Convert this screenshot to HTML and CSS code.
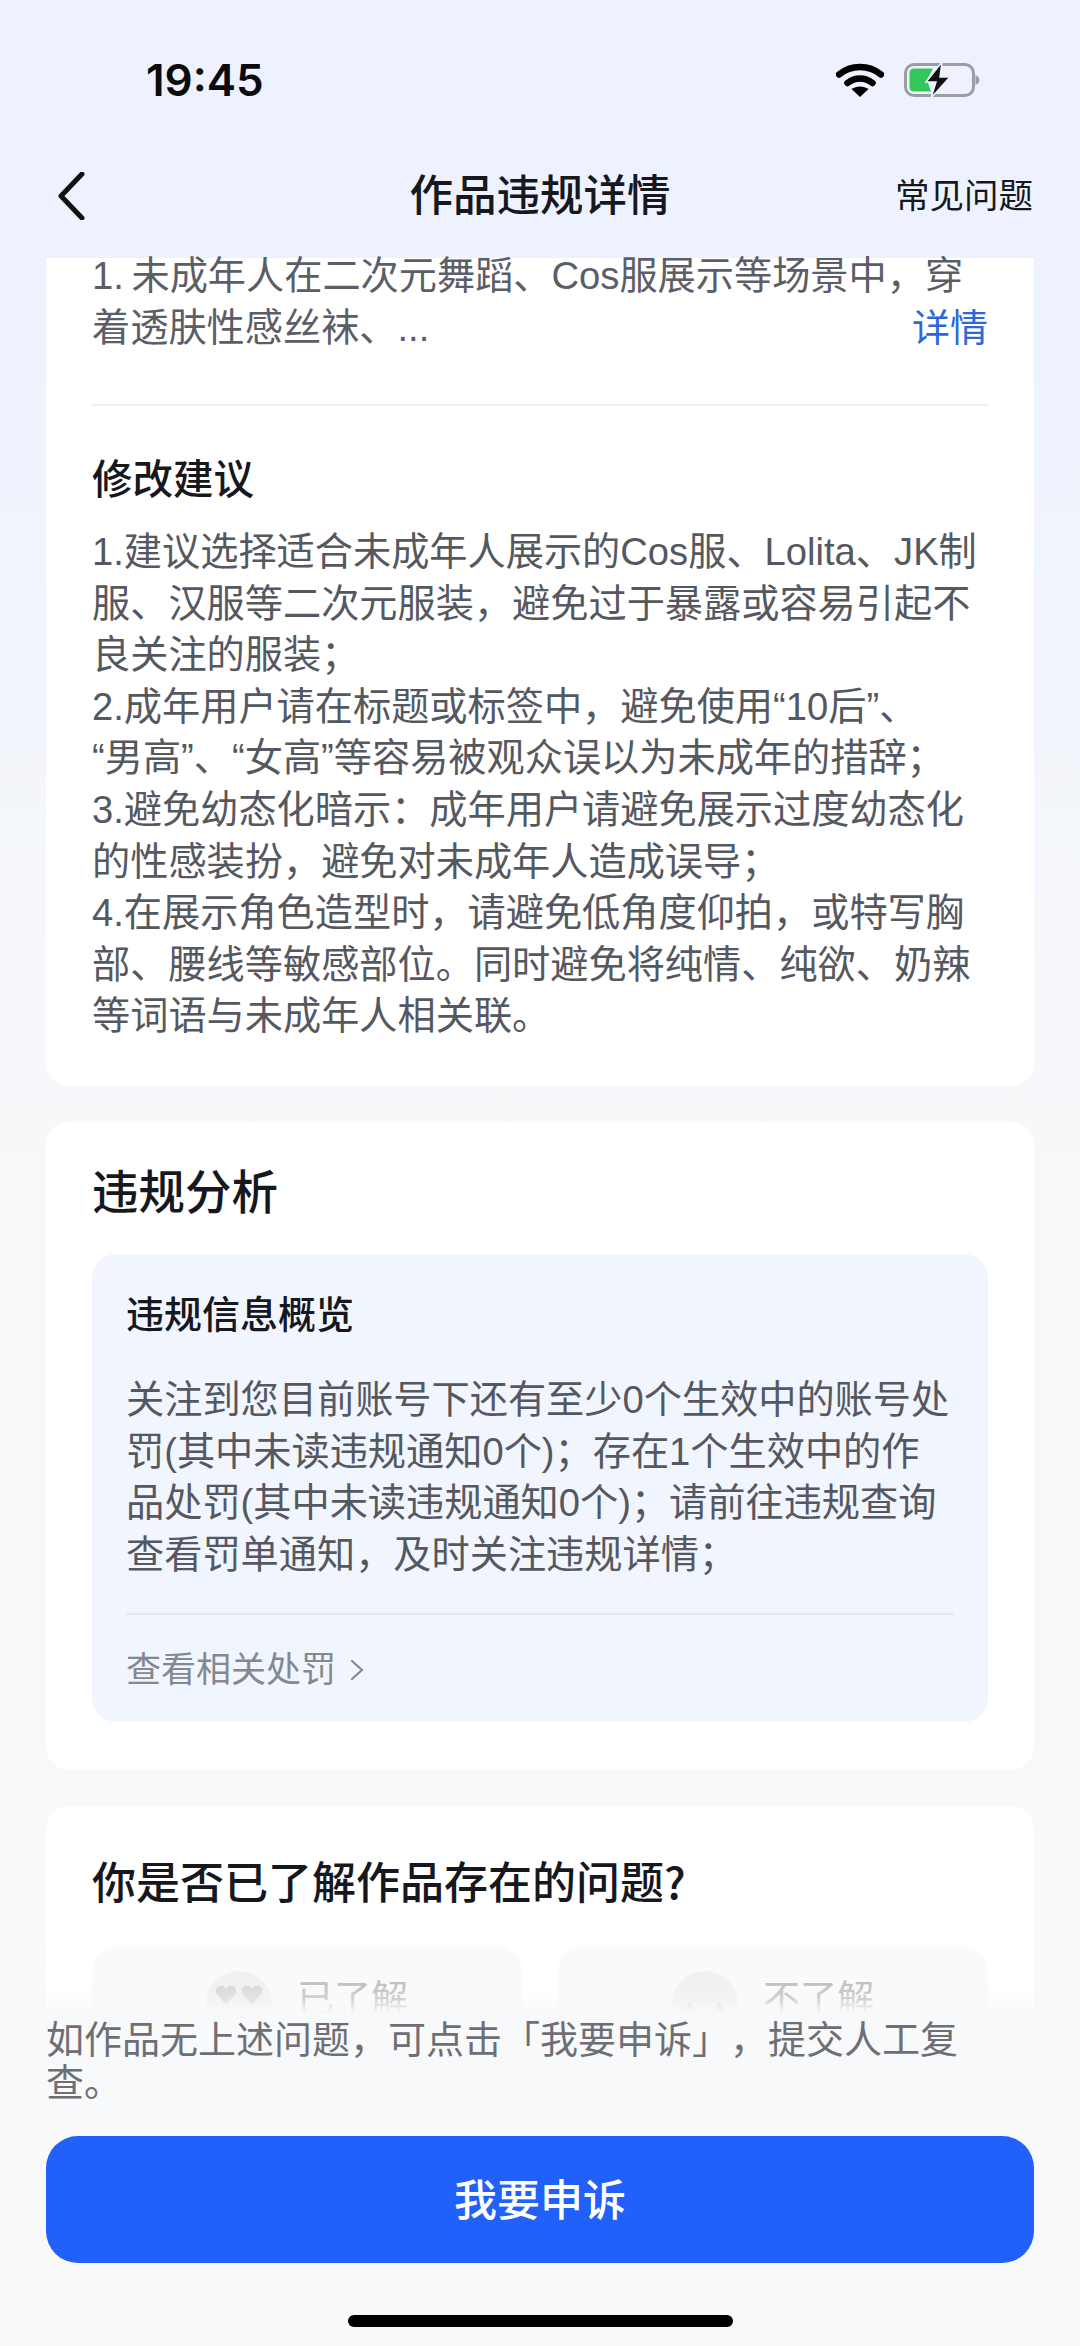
FILE: index.html
```html
<!DOCTYPE html>
<html lang="zh-CN">
<head>
    <meta charset="UTF-8">
    <meta name="viewport" content="width=device-width, initial-scale=1.0">
    <title>作品违规详情</title>
    <link rel="stylesheet" href="styles.css">
</head>
<body>
    <div class="page">
        <div class="status-bar">
            <span class="time">19:45</span>
            <div class="status-icons">
                <svg class="wifi" width="48" height="34" viewBox="0 0 48 34">
                    <path d="M3 11.500C15 1.500 33 1.500 45 11.500" fill="none" stroke="#000" stroke-width="6.500" stroke-linecap="round"/>
                    <path d="M11.500 20C19 14 29 14 36.500 20" fill="none" stroke="#000" stroke-width="6.500" stroke-linecap="round"/>
                    <path d="M24 34L15.500 26C20.500 22.500 27.500 22.500 32.500 26Z" fill="#000"/>
                </svg>
                <svg class="battery" width="76" height="36" viewBox="0 0 76 36">
                    <rect x="1.500" y="2.500" width="68" height="31" rx="8.500" fill="none" stroke="#9a9da2" stroke-width="3"/>
                    <path d="M71.500 13V23C74 22 75.500 20 75.500 18C75.500 16 74 14 71.500 13Z" fill="#9a9da2"/>
                    <path d="M10 6.500H29L23 18L27 29.500H10C7 29.500 5.500 28 5.500 25V11C5.500 8 7 6.500 10 6.500Z" fill="#34c759"/>
                    <path d="M38 0L22 20H32L27 36L46 15H36Z" fill="#111" stroke="#eef2fd" stroke-width="1.500"/>
                </svg>
            </div>
        </div>

        <div class="nav">
            <svg class="back" width="28" height="48" viewBox="0 0 28 48">
                <path d="M25 2L4 24L25 46" fill="none" stroke="#111" stroke-width="5" stroke-linecap="round" stroke-linejoin="round"/>
            </svg>
            <h1 class="nav-title">作品违规详情</h1>
            <span class="nav-link">常见问题</span>
        </div>

        <div class="scroll">
            <section class="card card-top">
                <div class="reason">
                    <p class="reason-text">1. 未成年人在二次元舞蹈、Cos服展示等场景中，穿<br>着透肤性感丝袜、...</p>
                    <a class="more">详情</a>
                </div>
                <div class="divider"></div>
                <h3 class="sub-title">修改建议</h3>
                <p class="body-text">1.建议选择适合未成年人展示的Cos服、Lolita、JK制服、汉服等二次元服装，避免过于暴露或容易引起不良关注的服装；<br>2.成年用户请在标题或标签中，避免使用“10后”、<br>“男高”、“女高”等容易被观众误以为未成年的措辞；<br>3.避免幼态化暗示：成年用户请避免展示过度幼态化的性感装扮，避免对未成年人造成误导；<br>4.在展示角色造型时，请避免低角度仰拍，或特写胸部、腰线等敏感部位。同时避免将纯情、纯欲、奶辣等词语与未成年人相关联。</p>
            </section>

            <section class="card card-analysis">
                <h2 class="card-title">违规分析</h2>
                <div class="overview">
                    <h4 class="overview-title">违规信息概览</h4>
                    <p class="overview-text">关注到您目前账号下还有至少0个生效中的账号处罚(其中未读违规通知0个)；存在1个生效中的作品处罚(其中未读违规通知0个)；请前往违规查询查看罚单通知，及时关注违规详情；</p>
                    <div class="overview-link">
                        <span>查看相关处罚</span>
                        <svg width="14" height="22" viewBox="0 0 14 22">
                            <path d="M2 2L12 11L2 20" fill="none" stroke="#85888f" stroke-width="2.200" stroke-linecap="round" stroke-linejoin="round"/>
                        </svg>
                    </div>
                </div>
            </section>

            <section class="card card-question">
                <h2 class="question-title">你是否已了解作品存在的问题?</h2>
                <div class="choices">
                    <div class="choice">
                        <svg width="66" height="66" viewBox="0 0 66 66">
                            <circle cx="33" cy="33" r="33" fill="#f1f1f1"/>
                            <path d="M20 34L10 22C8 15 17 12 20 18C23 12 32 15 30 22Z" fill="#d9d9d9"/>
                            <path d="M46 34L36 22C34 15 43 12 46 18C49 12 58 15 56 22Z" fill="#d9d9d9"/>
                            <rect x="17" y="44" width="32" height="7" rx="3.500" fill="#e2e2e2"/>
                        </svg>
                        <span class="choice-label">已了解</span>
                    </div>
                    <div class="choice">
                        <svg width="66" height="66" viewBox="0 0 66 66">
                            <circle cx="33" cy="33" r="33" fill="#f1f1f1"/>
                            <path d="M18 30C14 37 13 39 13 41A5 5 0 0 0 23 41C23 39 22 37 18 30Z" fill="#d9d9d9"/>
                            <path d="M47 30C43 37 42 39 42 41A5 5 0 0 0 52 41C52 39 51 37 47 30Z" fill="#d9d9d9"/>
                        </svg>
                        <span class="choice-label">不了解</span>
                    </div>
                </div>
            </section>
        </div>

        <div class="footer">
            <p class="footer-text">如作品无上述问题，可点击「我要申诉」，提交人工复查。</p>
            <button class="appeal" type="button">我要申诉</button>
            <div class="home-bar"></div>
        </div>
    </div>
</body>
</html>
```

FILE: styles.css
```css
* {
    box-sizing: border-box;
}
body {
    margin: 0;
    font-family: "Liberation Sans", "Noto Sans CJK SC", sans-serif;
    color: #16181d;
}
h1, h2, h3, h4, p {
    margin: 0;
    font-weight: 400;
}
.page {
    position: relative;
    width: 1080px;
    height: 2346px;
    display: flex;
    flex-direction: column;
    overflow: hidden;
    background: linear-gradient(#edf2fe 0, #edf2fe 260px, #f7f8fa 1100px, #f8f9fa 100%);
}
.status-bar {
    height: 130px;
    flex-shrink: 0;
    display: flex;
    justify-content: space-between;
    align-items: flex-start;
    padding: 54px 100px 0 146px;
}
.time {
    font-family: Inter, sans-serif;
    font-size: 44px;
    font-weight: 600;
    line-height: 52px;
    color: #0b0b0d;
}
.status-icons {
    display: flex;
    align-items: center;
    gap: 20px;
    padding-top: 8px;
}
.nav {
    height: 118px;
    flex-shrink: 0;
    position: relative;
    display: flex;
    align-items: center;
    justify-content: space-between;
    padding: 14px 47px 0 57px;
}
.nav-title {
    position: absolute;
    left: 0;
    right: 0;
    top: 39px;
    text-align: center;
    font-size: 43.500px;
    line-height: 54px;
    font-weight: 500;
}
.nav-link {
    font-size: 34.500px;
    line-height: 50px;
}
.scroll {
    flex: 1;
    min-height: 0;
    overflow: hidden;
    display: flex;
    flex-direction: column;
    gap: 36px;
    padding: 10px 46px 0;
}
.card {
    flex-shrink: 0;
    background: #fff;
    border-radius: 24px;
    padding: 0 46px;
}
.card-top {
    height: 828px;
    border-radius: 0 0 24px 24px;
}
.reason {
    position: relative;
    margin-top: -8px;
    height: 154px;
}
.reason-text {
    font-size: 38.200px;
    line-height: 52px;
    color: #5b5e66;
    white-space: nowrap;
    word-spacing: -3px;
}
.more {
    position: absolute;
    right: 0;
    top: 52px;
    font-size: 38px;
    line-height: 52px;
    color: #2e68d8;
}
.divider {
    height: 2px;
    background: #f1f2f4;
}
.sub-title {
    margin-top: 46px;
    font-size: 40.500px;
    line-height: 56px;
    font-weight: 500;
}
.body-text {
    margin-top: 18px;
    font-size: 38.200px;
    line-height: 51.600px;
    color: #55585f;
}
.card-analysis {
    height: 648px;
    padding-top: 39px;
}
.card-title {
    font-size: 46.500px;
    line-height: 64px;
    font-weight: 500;
}
.overview {
    margin-top: 29px;
    height: 468px;
    background: #f1f5fe;
    border-radius: 24px;
    padding: 35px 34px 0;
}
.overview-title {
    font-size: 38px;
    line-height: 52px;
    font-weight: 500;
}
.overview-text {
    width: 824px;
    margin-top: 33px;
    font-size: 38.200px;
    line-height: 51.500px;
    color: #55585f;
}
.overview-link {
    margin-top: 33px;
    padding-top: 30px;
    border-top: 2px solid #e4e7ee;
    display: flex;
    align-items: center;
    gap: 14px;
    font-size: 35px;
    line-height: 50px;
    color: #85888f;
}
.card-question {
    height: 400px;
    padding-top: 44px;
}
.question-title {
    font-family: "Noto Sans CJK SC", sans-serif;
    font-size: 44px;
    line-height: 60px;
    font-weight: 500;
}
.choices {
    margin-top: 37px;
    display: flex;
    gap: 36px;
}
.choice {
    flex: 1;
    height: 130px;
    background: #fafafa;
    border-radius: 24px;
    display: flex;
    justify-content: center;
    align-items: flex-start;
    gap: 25px;
    padding-top: 24px;
}
.choice-label {
    margin-top: 10px;
    font-size: 37px;
    line-height: 38px;
    color: #c2c2c2;
}
.footer {
    position: absolute;
    left: 0;
    right: 0;
    bottom: 0;
    height: 361px;
    padding: 34px 46px 0;
    background: linear-gradient(rgba(248, 249, 250, 0), rgba(248, 249, 250, 0.300) 14px, #f8f9fa 28px);
}
.footer-text {
    max-width: 930px;
    font-size: 38px;
    line-height: 43px;
    color: #6d6f75;
    text-spacing-trim: space-all;
}
.appeal {
    display: block;
    width: 100%;
    height: 127px;
    margin-top: 31px;
    padding: 0 0 5px;
    border: none;
    border-radius: 32px;
    background: #2160fb;
    color: #fff;
    font-family: inherit;
    font-size: 43px;
    font-weight: 500;
}
.home-bar {
    width: 385px;
    height: 12px;
    margin: 52px auto 0;
    border-radius: 6px;
    background: #000;
}
```
